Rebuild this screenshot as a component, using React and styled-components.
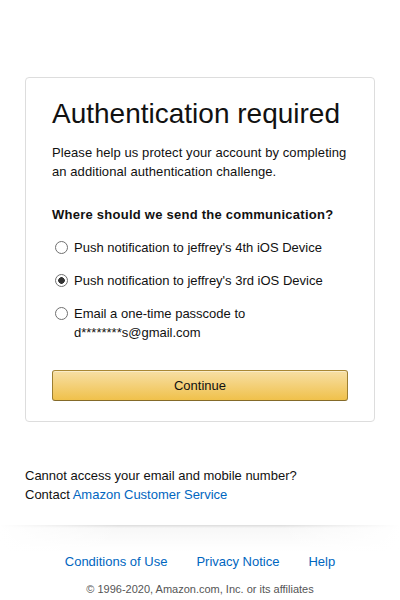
import React, { useState } from 'react'
import styled, { createGlobalStyle } from 'styled-components'

const GlobalStyle = createGlobalStyle`
    html, body {
        margin: 0;
        padding: 0;
        background: #fff;
    }
    body {
        font-family: "Liberation Sans", Arial, sans-serif;
        font-size: 13px;
        line-height: 19px;
        color: #111;
    }
`;

const Page = styled.div`
    padding-top: 77px;
    padding-bottom: 8px;
`;

const Card = styled.div`
    box-sizing: border-box;
    width: 350px;
    margin: 0 auto;
    border: 1px solid #ddd;
    border-radius: 4px;
    padding: 19px 26px 20px;
`;

const Title = styled.h1`
    margin: 0 0 12px;
    font-size: 28px;
    font-weight: 400;
    line-height: 1.2;
    color: #111;
`;

const Text = styled.p`
    margin: 0 0 24px;
    letter-spacing: 0.08px;
`;

const Question = styled.h4`
    margin: 0 0 14px;
    font-size: 13px;
    font-weight: 700;
    line-height: 19px;
    letter-spacing: 0.25px;
`;

const Options = styled.div`
    display: flex;
    flex-direction: column;
    gap: 14px;
    margin-bottom: 28px;
`;

const Option = styled.label`
    display: flex;
    align-items: flex-start;
    cursor: pointer;
`;

const Radio = styled.input`
    appearance: none;
    flex: none;
    box-sizing: border-box;
    width: 13px;
    height: 13px;
    margin: 3px 6px 0 3px;
    border: 1px solid #707070;
    border-radius: 50%;
    background: #fff;
    &:checked {
        background: radial-gradient(circle, #333 0 3px, #fff 3.6px);
    }
`;

const ButtonWrap = styled.button`
    display: block;
    width: 100%;
    height: 31px;
    padding: 0;
    border: 1px solid;
    border-color: #a88734 #9c7e31 #846a29;
    border-radius: 3px;
    background: linear-gradient(to bottom, #f7dfa5, #f0c14b);
    box-shadow: 0 1px 0 rgba(255, 255, 255, 0.4) inset;
    font-family: inherit;
    font-size: 13px;
    color: #111;
    cursor: pointer;
`;

const Help = styled.div`
    width: 350px;
    margin: 44px auto 0;
`;

const Link = styled.a`
    color: #0066c0;
    text-decoration: none;
`;

const Divider = styled.div`
    position: relative;
    margin-top: 21px;
    height: 27px;
    background: linear-gradient(to bottom, rgba(0, 0, 0, 0.14), rgba(0, 0, 0, 0.03) 3px, rgba(0, 0, 0, 0));
    &::after {
        content: "";
        position: absolute;
        inset: 0;
        background: linear-gradient(to right, #fff, rgba(255, 255, 255, 0) 30%, rgba(255, 255, 255, 0) 70%, #fff);
    }
`;

const FooterLinks = styled.div`
    display: flex;
    justify-content: center;
    gap: 29px;
`;

const Copyright = styled.div`
    margin-top: 11px;
    text-align: center;
    font-size: 11px;
    line-height: 15px;
    color: #555;
`;

const options = [
    { id: 'ios4', label: "Push notification to jeffrey's 4th iOS Device" },
    { id: 'ios3', label: "Push notification to jeffrey's 3rd iOS Device" },
    { id: 'email', label: 'Email a one-time passcode to', extra: 'd********s@gmail.com' },
];

const App = () => {
    const [selected, setSelected] = useState('ios3');
  return (
    <Page>
        <GlobalStyle />
        <Card>
            <Title>Authentication required</Title>
            <Text>Please help us protect your account by completing an additional authentication challenge.</Text>
            <Question>Where should we send the communication?</Question>
            <Options>
                {options.map(opt => (
                    <Option key={opt.id}>
                        <Radio
                            type="radio"
                            name="channel"
                            checked={selected === opt.id}
                            onChange={() => setSelected(opt.id)}
                        />
                        <span>
                            {opt.label}
                            {opt.extra && <><br />{opt.extra}</>}
                        </span>
                    </Option>
                ))}
            </Options>
            <ButtonWrap type="button">Continue</ButtonWrap>
        </Card>
        <Help>
            Cannot access your email and mobile number?<br />
            Contact <Link href="#">Amazon Customer Service</Link>
        </Help>
        <Divider />
        <FooterLinks>
            <Link href="#">Conditions of Use</Link>
            <Link href="#">Privacy Notice</Link>
            <Link href="#">Help</Link>
        </FooterLinks>
        <Copyright>© 1996-2020, Amazon.com, Inc. or its affiliates</Copyright>
    </Page>
  )
}

export default App;
